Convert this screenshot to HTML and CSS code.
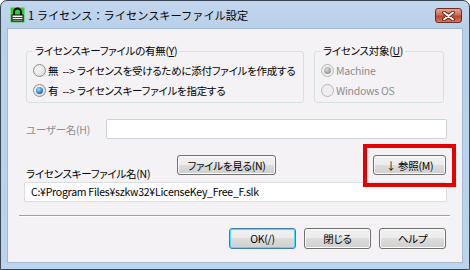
FILE: index.html
```html
<!DOCTYPE html>
<html lang="ja">
<head>
    <meta charset="UTF-8">
    <title>ライセンスキーファイル設定</title>
    <link rel="stylesheet" href="styles.css">
</head>
<body>

<div class="window">
    <div class="titlebar">
        <svg class="lock" width="15" height="16" viewBox="0 0 15 16">
            <rect x="0.5" y="0.5" width="14" height="15" fill="#2fd12f"/>
            <path d="M4 8 V5 a3.5 3.5 0 0 1 7 0 V8" fill="none" stroke="#000" stroke-width="2"/>
            <rect x="2" y="8" width="11" height="6" fill="#fff" stroke="#000" stroke-width="1"/>
            <path d="M2 10.5 H13 M2 12.5 H13" stroke="#444" stroke-width="1"/>
        </svg>
        <span class="title">1 ライセンス：ライセンスキーファイル設定</span>
        <span class="close">
            <svg width="13" height="10" viewBox="0 0 13 10">
                <path d="M2 1.5 L11 8.5 M11 1.5 L2 8.5" stroke="#4a1a10" stroke-width="3.6" stroke-linecap="round"/>
                <path d="M2 1.5 L11 8.5 M11 1.5 L2 8.5" stroke="#fff" stroke-width="2" stroke-linecap="round"/>
            </svg>
        </span>
    </div>

    <div class="client">
        <div class="top-row">
            <fieldset class="group group-file">
                <legend>ライセンスキーファイルの有無(<u>Y</u>)</legend>
                <div class="radio-row"><span class="radio"></span>無&nbsp; --&gt; ライセンスを受けるために添付ファイルを作成する</div>
                <div class="radio-row"><span class="radio checked"></span>有&nbsp; --&gt; ライセンスキーファイルを指定する</div>
            </fieldset>
            <fieldset class="group group-target">
                <legend>ライセンス対象(<u>U</u>)</legend>
                <div class="radio-row disabled"><span class="radio checked"></span>Machine</div>
                <div class="radio-row disabled"><span class="radio"></span>Windows OS</div>
            </fieldset>
        </div>

        <div class="user-row">
            <span class="user-label">ユーザー名(H)</span>
            <div class="textbox"></div>
        </div>

        <div class="file-row">
            <span class="file-label">ライセンスキーファイル名(N)</span>
            <button class="btn btn-view">ファイルを見る(N)</button>
            <button class="btn btn-browse">↓ 参照(M)</button>
        </div>

        <div class="textbox path">C:¥Program Files¥szkw32¥LicenseKey_Free_F.slk</div>

        <div class="separator"></div>

        <div class="actions">
            <button class="btn btn-ok">OK(/)</button>
            <button class="btn">閉じる</button>
            <button class="btn">ヘルプ</button>
        </div>

        <div class="highlight"></div>
    </div>
</div>

</body>
</html>
```

FILE: styles.css
```css
body {
    margin: 0;
    font-family: "Noto Sans CJK JP", "Noto Sans", sans-serif;
    font-size: 10.5px;
    letter-spacing: -0.25px;
    color: #000;
    background: #fff;
}
.window {
    width: 470px;
    height: 270px;
    box-sizing: border-box;
    border: 1px solid #3a4656;
    border-radius: 7px 7px 0 0;
    background: linear-gradient(#c2d6ee, #b9d0ea 30px, #bcd3ec);
    padding: 0 6px 6px 6px;
    display: flex;
    flex-direction: column;
}
.titlebar {
    height: 27px;
    display: flex;
    align-items: center;
}
.lock {
    margin: 1px 0 0 3px;
}
.title {
    margin-left: 3px;
    font-size: 11.2px;
    letter-spacing: 0;
}
.close {
    margin-left: auto;
    margin-right: 1px;
    margin-top: 2px;
    width: 27px;
    height: 15px;
    box-sizing: border-box;
    border: 1px solid #6b2a22;
    border-radius: 3px;
    background: linear-gradient(#e8a493, #d26b55 45%, #c0442c 55%, #d5775f);
    display: flex;
    align-items: center;
    justify-content: center;
}
.client {
    flex: 1;
    position: relative;
    background: #f5f2f5;
    border: 1px solid #a4b9d3;
    font-feature-settings: "palt";
}
.top-row {
    display: flex;
    gap: 10px;
    margin: 15px 0 0 18px;
}
.group {
    margin: 0;
    min-width: 0;
    padding: 2px 0 1px 6px;
    border: 1px solid #d5dfe5;
    border-radius: 3px;
    height: 59px;
    box-sizing: border-box;
}
.group legend {
    padding: 0 2px;
    line-height: 14px;
}
.group-file {
    width: 278px;
}
.group-target {
    width: 130px;
}
.radio-row {
    display: flex;
    align-items: center;
    height: 20px;
    white-space: nowrap;
}
.radio-row.disabled {
    color: #8d8d8d;
}
.radio {
    width: 11px;
    height: 11px;
    border-radius: 50%;
    border: 1px solid #8e8f8f;
    background: radial-gradient(circle at 40% 35%, #f8f8f8, #d7d7d7);
    margin-right: 2px;
    position: relative;
    flex: none;
}
.radio.checked::after {
    content: "";
    position: absolute;
    left: 2px;
    top: 2px;
    width: 7px;
    height: 7px;
    border-radius: 50%;
    background: radial-gradient(circle at 40% 35%, #9fe3ff, #1f6eae 70%);
}
.disabled .radio {
    border-color: #b8b8b8;
    background: #eeeeee;
}
.disabled .radio.checked::after {
    background: radial-gradient(circle at 40% 35%, #d8d8d8, #9a9a9a 70%);
}
.user-row {
    display: flex;
    align-items: center;
    margin: 16px 0 0 18px;
    height: 20px;
}
.user-label {
    width: 80px;
    color: #8d8d8d;
}
.textbox {
    width: 341px;
    height: 20px;
    box-sizing: border-box;
    background: #fff;
    border: 1px solid #cfd3d8;
    border-radius: 2px;
}
.file-row {
    display: flex;
    align-items: flex-start;
    margin: 16px 0 0 18px;
    height: 27px;
}
.file-label {
    width: 151px;
    align-self: flex-end;
    line-height: 14px;
    margin-bottom: 1px;
}
.btn {
    font-family: inherit;
    font-size: 10.5px;
    letter-spacing: -0.25px;
    font-feature-settings: "palt";
    height: 20px;
    padding: 0;
    border: 1px solid #707070;
    border-radius: 3px;
    background: linear-gradient(#f2f2f2, #ebebeb 50%, #dddddd 50%, #cfcfcf);
    box-shadow: inset 0 0 0 1px #fbfbfb;
    color: #000;
}
.btn-view {
    width: 99px;
}
.btn-browse {
    width: 73px;
    margin-left: auto;
    margin-right: 16px;
}
.path {
    margin-left: 16px;
    width: 423px;
    padding: 0 6px;
    line-height: 18px;
    border-color: #dadde1;
}
.separator {
    margin: 13px 12px 0 11px;
    border-top: 1px solid #a0a0a0;
    border-bottom: 1px solid #fff;
}
.actions {
    display: flex;
    justify-content: flex-end;
    gap: 8px;
    margin: 11px 16px 0 0;
}
.actions .btn {
    width: 67px;
    height: 21px;
}
.btn-ok {
    border-color: #3c7fb1;
    box-shadow: inset 0 0 0 1px #48dcfb;
}
.highlight {
    position: absolute;
    left: 355px;
    top: 115px;
    width: 93px;
    height: 43px;
    box-sizing: border-box;
    border: 4px solid #e60000;
}
```
